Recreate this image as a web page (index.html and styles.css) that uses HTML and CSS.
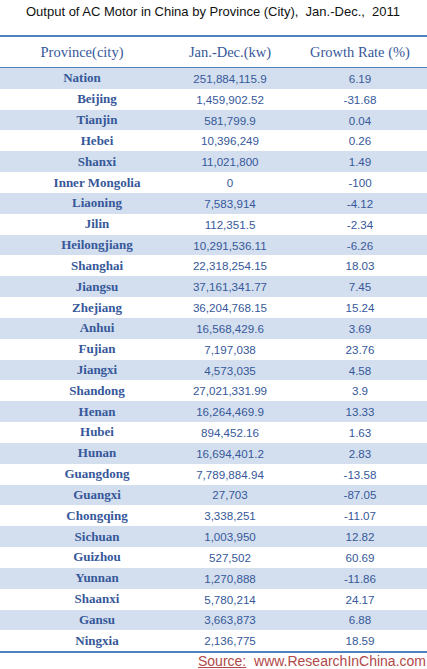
FILE: index.html
```html
<!DOCTYPE html>
<html>
<head>
<meta charset="utf-8">
<link rel="stylesheet" href="styles.css">
</head>
<body>
<div class="page">
  <div class="title">Output of AC Motor in China by Province (City),&nbsp; Jan.-Dec.,&nbsp; 2011</div>
  <div class="table">
    <div class="head">
      <div class="c1">Province(city)</div>
      <div class="c2">Jan.-Dec.(kw)</div>
      <div class="c3">Growth Rate (%)</div>
    </div>
    <div class="rows">
      <div class="row"><div class="c1 nation">Nation</div><div class="c2">251,884,115.9</div><div class="c3">6.19</div></div>
      <div class="row"><div class="c1">Beijing</div><div class="c2">1,459,902.52</div><div class="c3">-31.68</div></div>
      <div class="row"><div class="c1">Tianjin</div><div class="c2">581,799.9</div><div class="c3">0.04</div></div>
      <div class="row"><div class="c1">Hebei</div><div class="c2">10,396,249</div><div class="c3">0.26</div></div>
      <div class="row"><div class="c1">Shanxi</div><div class="c2">11,021,800</div><div class="c3">1.49</div></div>
      <div class="row"><div class="c1">Inner Mongolia</div><div class="c2">0</div><div class="c3">-100</div></div>
      <div class="row"><div class="c1">Liaoning</div><div class="c2">7,583,914</div><div class="c3">-4.12</div></div>
      <div class="row"><div class="c1">Jilin</div><div class="c2">112,351.5</div><div class="c3">-2.34</div></div>
      <div class="row"><div class="c1">Heilongjiang</div><div class="c2">10,291,536.11</div><div class="c3">-6.26</div></div>
      <div class="row"><div class="c1">Shanghai</div><div class="c2">22,318,254.15</div><div class="c3">18.03</div></div>
      <div class="row"><div class="c1">Jiangsu</div><div class="c2">37,161,341.77</div><div class="c3">7.45</div></div>
      <div class="row"><div class="c1">Zhejiang</div><div class="c2">36,204,768.15</div><div class="c3">15.24</div></div>
      <div class="row"><div class="c1">Anhui</div><div class="c2">16,568,429.6</div><div class="c3">3.69</div></div>
      <div class="row"><div class="c1">Fujian</div><div class="c2">7,197,038</div><div class="c3">23.76</div></div>
      <div class="row"><div class="c1">Jiangxi</div><div class="c2">4,573,035</div><div class="c3">4.58</div></div>
      <div class="row"><div class="c1">Shandong</div><div class="c2">27,021,331.99</div><div class="c3">3.9</div></div>
      <div class="row"><div class="c1">Henan</div><div class="c2">16,264,469.9</div><div class="c3">13.33</div></div>
      <div class="row"><div class="c1">Hubei</div><div class="c2">894,452.16</div><div class="c3">1.63</div></div>
      <div class="row"><div class="c1">Hunan</div><div class="c2">16,694,401.2</div><div class="c3">2.83</div></div>
      <div class="row"><div class="c1">Guangdong</div><div class="c2">7,789,884.94</div><div class="c3">-13.58</div></div>
      <div class="row"><div class="c1">Guangxi</div><div class="c2">27,703</div><div class="c3">-87.05</div></div>
      <div class="row"><div class="c1">Chongqing</div><div class="c2">3,338,251</div><div class="c3">-11.07</div></div>
      <div class="row"><div class="c1">Sichuan</div><div class="c2">1,003,950</div><div class="c3">12.82</div></div>
      <div class="row"><div class="c1">Guizhou</div><div class="c2">527,502</div><div class="c3">60.69</div></div>
      <div class="row"><div class="c1">Yunnan</div><div class="c2">1,270,888</div><div class="c3">-11.86</div></div>
      <div class="row"><div class="c1">Shaanxi</div><div class="c2">5,780,214</div><div class="c3">24.17</div></div>
      <div class="row"><div class="c1">Gansu</div><div class="c2">3,663,873</div><div class="c3">6.88</div></div>
      <div class="row"><div class="c1">Ningxia</div><div class="c2">2,136,775</div><div class="c3">18.59</div></div>
    </div>
  </div>
  <div class="source"><span class="src-label">Source:</span>&nbsp; www.ResearchInChina.com</div>
</div>
</body>
</html>
```

FILE: styles.css
```css
html, body {
  margin: 0;
  padding: 0;
  background: #ffffff;
}
.page {
  width: 427px;
  height: 669px;
  display: flex;
  flex-direction: column;
  overflow: hidden;
}
.title {
  height: 36px;
  box-sizing: border-box;
  padding-top: 4px;
  padding-left: 26px;
  font-family: "Liberation Sans", Arial, sans-serif;
  font-size: 13px;
  color: #111111;
  white-space: nowrap;
}
.table {
  border-top: 2px solid #4f81bd;
  border-bottom: 2px solid #4f81bd;
  color: #36589a;
}
.head {
  display: grid;
  grid-template-columns: 164px 132px 1fr;
  height: 30px;
  align-items: center;
  border-bottom: 1px solid #4f81bd;
  font-family: "Liberation Serif", "Times New Roman", serif;
  font-size: 14.5px;
}
.head .c3 {
  padding-right: 3px;
}
.rows {
  height: 583px;
  display: flex;
  flex-direction: column;
}
.row {
  flex: 1;
  display: grid;
  grid-template-columns: 164px 132px 1fr;
  align-items: center;
}
.row:nth-child(odd) {
  background: #d3dfee;
}
.c1, .c2, .c3 {
  text-align: center;
  white-space: nowrap;
}
.row .c1 {
  font-family: "Liberation Serif", "Times New Roman", serif;
  font-weight: bold;
  font-size: 13px;
  padding-left: 30px;
}
.row .c1.nation {
  padding-left: 0;
}
.row .c2, .row .c3 {
  font-family: "Liberation Sans", Arial, sans-serif;
  font-size: 11.6px;
}
.row .c3 {
  padding-right: 3px;
}
.source {
  text-align: right;
  padding-right: 1px;
  font-family: "Liberation Sans", Arial, sans-serif;
  font-size: 14px;
  color: #b04848;
  white-space: nowrap;
}
.src-label {
  text-decoration: underline;
}
```
